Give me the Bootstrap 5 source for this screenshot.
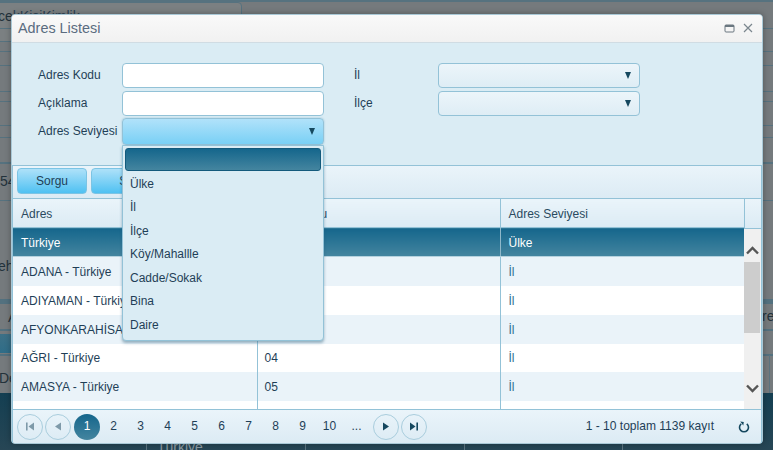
<!DOCTYPE html>
<html lang="tr">
<head>
  <meta charset="UTF-8">
  <title>Adres Listesi</title>
  <meta name="viewport" content="width=device-width, initial-scale=1">
  <link href="https://cdn.jsdelivr.net/npm/bootstrap@5.3.3/dist/css/bootstrap.min.css" rel="stylesheet">
  <style>
    html, body { height: 100%; }
    body { margin: 0; overflow: hidden; position: relative; background: #757a7d; font: 12px/1.2 "Liberation Sans", Arial, sans-serif; color: #1f3f57; }

    /* page dimmed behind the window */
    .back-bit { position: absolute; }
    .back-line { left: 0; width: 773px; height: 1px; background: #56727f; }
    .back-text { font-size: 14px; color: #23323b; white-space: nowrap; }
    .back-band { left: 0; width: 773px; background: #53717f; }
    .back-foot { left: 0; top: 393px; width: 773px; height: 57px; background: linear-gradient(#143f52, #274655); }
    .back-tab { left: -20px; top: 2px; width: 262px; height: 40px; border: 1px solid #56727f; border-radius: 4px; background: #7b8082; }
    .back-sep { top: 443px; width: 1px; height: 7px; background: #5c7480; }
    .back-sep-up { top: 355px; width: 1px; height: 38px; background: #5c7480; }

    .win { position: absolute; left: 11px; top: 14px; width: 752px; height: 430px; border-radius: 4px; background: #daecf4; border: 1px solid #a9c8d6; box-shadow: 0 0 6px rgba(0,0,0,.3); }
    .win-head { height: 28px; padding: 0 9px 0 6px; background: linear-gradient(#f9f9f9, #f1f1f1); border-bottom: 1px solid #d0dce3; border-radius: 3px 3px 0 0; }
    .win-title { font-size: 14.4px; color: #5a6c80; }

    .form-area { height: 123px; padding: 20px 0 0 26px; }
    .form-line { height: 25px; margin-bottom: 3px; }
    .lbl-a { width: 84px; }
    .lbl-b { width: 84px; margin-left: 30px; }
    .fld { width: 202px; height: 25px; border: 1px solid #93c2d7; border-radius: 4px; background: #fff; }
    .cmb { background: linear-gradient(#ecf5fa, #deedf5); padding-right: 8px; }
    .cmb-open { height: 27px; background: linear-gradient(#b1e2fa, #79d0f5); box-shadow: 0 0 2px #93c2d7; padding-right: 8px; }
    .tri { width: 0; height: 0; border: 3.5px solid transparent; border-top: 7px solid #15485f; border-bottom: 0; }

    .grid-box { width: 750px; height: 278px; border: 1px solid #93c2d7; border-width: 1px 1px 0 1px; }
    .tool-bar { height: 33px; padding: 2px 4px; background: linear-gradient(#eaf4fa, #dcebf4); border-bottom: 1px solid #93c2d7; }
    .act-btn { width: 70px; height: 26px; padding: 0; font-size: 12px; color: #1f3f57; border: 1px solid #7cc4e4; border-radius: 4px; background: linear-gradient(#aee1f9, #4fc1f2); }

    .scroll-wrap { height: 211px; overflow: hidden; }
    .grid-tbl { table-layout: fixed; width: 731px; border-collapse: collapse; margin: 0; }
    .grid-tbl th, .grid-tbl td { height: 29px; padding: 2px 8px 0; font-weight: 400; vertical-align: middle; white-space: nowrap; overflow: hidden; border-right: 1px solid #93c2d7; border-bottom: 0; color: #1f3f57; font-size: 12px; box-shadow: none; }
    .grid-tbl td:nth-child(2), .grid-tbl th:nth-child(2) { padding-left: 7px; }
    .grid-tbl td:last-child, .grid-tbl th:last-child { border-right: 0; }
    .grid-tbl thead th { background: linear-gradient(#eaf4fa, #dcebf4); border-bottom: 1px solid #93c2d7; color: #2a4a60; height: 29px; }
    .grid-tbl tr.picked td { background: linear-gradient(#15668c, #44859f); color: #fff; border-right-color: #8fb8ca; border-bottom: 1px solid #b5d2de; height: 29px; }
    .grid-tbl tr.odd-row td { background: #eaf3f9; }
    .grid-tbl tr.even-row td { background: #fff; }
    .grid-tbl tr.short-row td { height: 28px; padding-top: 0; }
    .grid-tbl td.seviye { color: #2a6f93; }

    .bar-col { width: 17px; height: 211px; background: #f0f0f0; }
    .bar-head { height: 30px; background: linear-gradient(#eaf4fa, #dcebf4); border-left: 1px solid #93c2d7; border-bottom: 1px solid #93c2d7; }
    .bar-up { height: 33px; padding-top: 10px; }
    .bar-down { height: 29px; padding-bottom: 13px; }
    .bar-thumb { height: 71px; background: #cdcdcd; margin-right: 1px; }
    .bar-fill { flex: 1; }

    .pager { height: 34px; border-top: 1px solid #93c2d7; background: linear-gradient(#eaf4fa, #dcebf4); padding-left: 4px; padding-right: 11px; border-radius: 0 0 3px 3px; }
    .pg-round { width: 26px; height: 26px; border: 1px solid #a9cddd; border-radius: 50%; }
    .pg-gap { margin-right: 2px; }
    .pg-cur { width: 26px; height: 26px; border-radius: 50%; background: linear-gradient(#15668c, #44859f); color: #fff; font-size: 12px; margin-left: 1px; }
    .pg-num { width: 27px; text-align: center; color: #1f3f57; }
    .pg-next { margin-left: 3px; }
    .pg-info { color: #1f3f57; margin-left: auto; margin-right: 24px; font-size: 12.05px; }

    .drop-list { position: absolute; left: 110px; top: 130px; width: 202px; height: 196px; background: #daecf4; border: 1px solid #93c2d7; border-radius: 0 0 4px 4px; box-shadow: 0 2px 3px rgba(40,90,120,.45); padding: 2px; }
    .drop-first { height: 23px; margin-bottom: 1.5px; background: linear-gradient(#15668c, #44859f); border: 1px solid #135a7c; border-radius: 3px; }
    .drop-item { height: 23.5px; line-height: 23.5px; padding-left: 5px; color: #1f3f57; }
  </style>
</head>
<body>

  <!-- sayfa arka plani -->
  <div class="back-bit back-tab"></div>
  <div class="back-bit back-line" style="top:0;height:2px"></div>
  <div class="back-bit back-text" style="left:-2px;top:8px">ce<span style="color:#2c4355">kKisiKimlik</span></div>
  <div class="back-bit back-line" style="top:28px"></div>
  <div class="back-bit back-line" style="top:51px"></div>
  <div class="back-bit back-line" style="top:65px"></div>
  <div class="back-bit back-line" style="top:91px"></div>
  <div class="back-bit back-line" style="top:101px"></div>
  <div class="back-bit back-line" style="top:125px"></div>
  <div class="back-bit back-line" style="top:137px"></div>
  <div class="back-bit back-line" style="top:162px;height:2px"></div>
  <div class="back-bit back-line" style="top:200px"></div>
  <div class="back-bit back-text" style="left:0;top:173px">54</div>
  <div class="back-bit back-text" style="left:-2px;top:258px">ehi</div>
  <div class="back-bit back-band" style="top:299px;height:5px"></div>
  <div class="back-bit back-text" style="left:8px;top:309px">A</div>
  <div class="back-bit back-text" style="left:762px;top:308px">re</div>
  <div class="back-bit back-band" style="top:329px;height:2px"></div>
  <div class="back-bit" style="left:0;top:334px;width:11px;height:19px;background:linear-gradient(#3d7086,#2f6d88)"></div>
  <div class="back-bit back-band" style="top:354px;height:2px"></div>
  <div class="back-bit back-text" style="left:-1px;top:370px">De</div>
  <div class="back-bit back-sep-up" style="left:769px"></div>
  <div class="back-bit back-foot"></div>
  <div class="back-bit back-text" style="left:157px;top:439px;color:#8d9ba2">Türkiye</div>
  <div class="back-bit back-sep" style="left:146px"></div>
  <div class="back-bit back-sep" style="left:305px"></div>
  <div class="back-bit back-sep" style="left:464px"></div>
  <div class="back-bit back-sep" style="left:622px"></div>

  <div class="win d-flex flex-column">
    <div class="win-head d-flex align-items-center justify-content-between">
      <span class="win-title">Adres Listesi</span>
      <span class="d-flex align-items-center gap-2">
        <svg width="11" height="9" viewBox="0 0 11 9"><rect x="1" y="1" width="9" height="7" rx="1" fill="none" stroke="#6a7780"/><rect x="1" y="1" width="9" height="2" fill="#6a7780"/></svg>
        <svg width="10" height="10" viewBox="0 0 10 10"><path d="M1 1l8 8M9 1l-8 8" stroke="#7b868e" stroke-width="1.2" fill="none"/></svg>
      </span>
    </div>

    <div class="form-area">
      <div class="form-line d-flex align-items-center">
        <span class="lbl-a">Adres Kodu</span>
        <div class="fld"></div>
        <span class="lbl-b">İl</span>
        <div class="fld cmb d-flex align-items-center justify-content-end"><span class="tri"></span></div>
      </div>
      <div class="form-line d-flex align-items-center">
        <span class="lbl-a">Açıklama</span>
        <div class="fld"></div>
        <span class="lbl-b">İlçe</span>
        <div class="fld cmb d-flex align-items-center justify-content-end"><span class="tri"></span></div>
      </div>
      <div class="form-line d-flex align-items-center">
        <span class="lbl-a">Adres Seviyesi</span>
        <div class="fld cmb-open d-flex align-items-center justify-content-end"><span class="tri"></span></div>
      </div>
    </div>

    <div class="grid-box d-flex flex-column">
      <div class="tool-bar d-flex gap-1">
        <button type="button" class="btn act-btn">Sorgu</button>
        <button type="button" class="btn act-btn">Sil</button>
      </div>
      <div class="scroll-wrap d-flex">
        <table class="table grid-tbl">
          <colgroup><col style="width:244px"><col style="width:243px"><col style="width:244px"></colgroup>
          <thead>
            <tr><th>Adres</th><th>Adres Kodu</th><th>Adres Seviyesi</th></tr>
          </thead>
          <tbody>
            <tr class="picked"><td>Türkiye</td><td></td><td>Ülke</td></tr>
            <tr class="odd-row"><td>ADANA - Türkiye</td><td>01</td><td class="seviye">İl</td></tr>
            <tr class="even-row"><td>ADIYAMAN - Türkiye</td><td>02</td><td class="seviye">İl</td></tr>
            <tr class="odd-row"><td>AFYONKARAHİSAR - Türkiye</td><td>03</td><td class="seviye">İl</td></tr>
            <tr class="even-row short-row"><td>AĞRI - Türkiye</td><td>04</td><td class="seviye">İl</td></tr>
            <tr class="odd-row"><td>AMASYA - Türkiye</td><td>05</td><td class="seviye">İl</td></tr>
            <tr class="even-row"><td></td><td></td><td></td></tr>
          </tbody>
        </table>
        <div class="bar-col d-flex flex-column">
          <div class="bar-head"></div>
          <div class="bar-up d-flex justify-content-center align-items-center">
            <svg width="13" height="9" viewBox="0 0 13 9"><path d="M1 7.5l5.5-5.5 5.5 5.5" fill="none" stroke="#555" stroke-width="2.4"/></svg>
          </div>
          <div class="bar-thumb"></div>
          <div class="bar-fill"></div>
          <div class="bar-down d-flex justify-content-center align-items-center">
            <svg width="13" height="9" viewBox="0 0 13 9"><path d="M1 1.5l5.5 5.5 5.5-5.5" fill="none" stroke="#555" stroke-width="2.4"/></svg>
          </div>
        </div>
      </div>
      <div class="pager d-flex align-items-center">
        <span class="pg-round pg-gap d-flex align-items-center justify-content-center">
          <svg width="10" height="9" viewBox="0 0 10 9"><rect x="1" y="0.5" width="1.6" height="8" fill="#7e9aa9"/><path d="M9 0.5v8l-5.5-4z" fill="#7e9aa9"/></svg>
        </span>
        <span class="pg-round pg-gap d-flex align-items-center justify-content-center">
          <svg width="8" height="9" viewBox="0 0 8 9"><path d="M7 0.5v8l-6-4z" fill="#7e9aa9"/></svg>
        </span>
        <span class="pg-cur d-flex align-items-center justify-content-center">1</span>
        <span class="pg-num">2</span><span class="pg-num">3</span><span class="pg-num">4</span><span class="pg-num">5</span><span class="pg-num">6</span><span class="pg-num">7</span><span class="pg-num">8</span><span class="pg-num">9</span><span class="pg-num">10</span><span class="pg-num">...</span>
        <span class="pg-round pg-gap pg-next d-flex align-items-center justify-content-center">
          <svg width="8" height="9" viewBox="0 0 8 9"><path d="M1 0.5v8l6-4z" fill="#15485f"/></svg>
        </span>
        <span class="pg-round d-flex align-items-center justify-content-center">
          <svg width="10" height="9" viewBox="0 0 10 9"><path d="M1 0.5v8l5.5-4z" fill="#15485f"/><rect x="7.4" y="0.5" width="1.6" height="8" fill="#15485f"/></svg>
        </span>
        <span class="pg-info">1 - 10 toplam 1139 kayıt</span>
        <svg width="12" height="13" viewBox="0 0 12 13"><path d="M3.2 3.8a4.5 4.5 0 1 0 5.6 0" fill="none" stroke="#15485f" stroke-width="1.6"/><path d="M2 1.5h3.6v3.6z" fill="#15485f" transform="rotate(8 3 3)"/></svg>
      </div>
    </div>

    <div class="drop-list">
      <div class="drop-first"></div>
      <div class="drop-item">Ülke</div>
      <div class="drop-item">İl</div>
      <div class="drop-item">İlçe</div>
      <div class="drop-item">Köy/Mahallle</div>
      <div class="drop-item">Cadde/Sokak</div>
      <div class="drop-item">Bina</div>
      <div class="drop-item">Daire</div>
    </div>
  </div>

  <script src="https://cdn.jsdelivr.net/npm/bootstrap@5.3.3/dist/js/bootstrap.bundle.min.js"></script>
</body>
</html>
